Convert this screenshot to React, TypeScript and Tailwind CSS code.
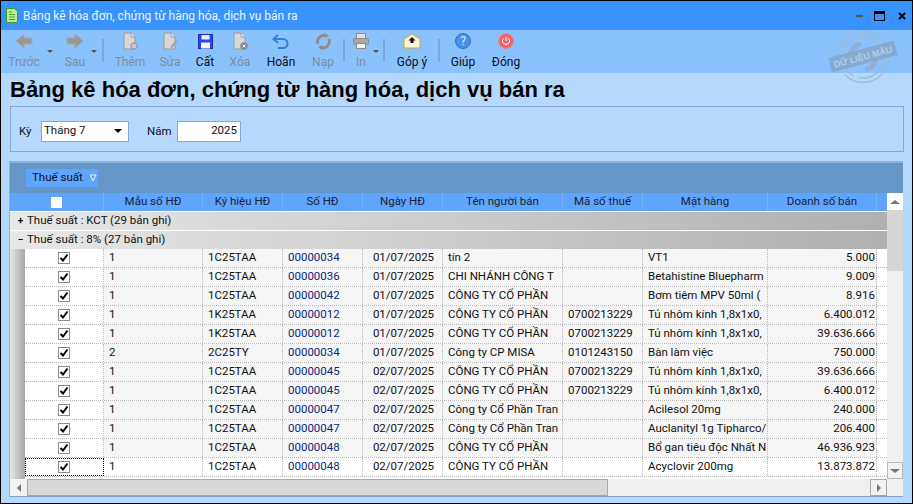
import { ReactNode } from "react";

const rows = [
  ["1", "1C25TAA", "00000034", "01/07/2025", "tín 2", "", "VT1", "5.000"],
  ["1", "1C25TAA", "00000036", "01/07/2025", "CHI NHÁNH CÔNG T", "", "Betahistine Bluepharm", "9.009"],
  ["1", "1C25TAA", "00000042", "01/07/2025", "CÔNG TY CỔ PHẦN", "", "Bơm tiêm MPV 50ml (", "8.916"],
  ["1", "1K25TAA", "00000012", "01/07/2025", "CÔNG TY CỔ PHẦN", "0700213229", "Tủ nhôm kính 1,8x1x0,", "6.400.012"],
  ["1", "1K25TAA", "00000012", "01/07/2025", "CÔNG TY CỔ PHẦN", "0700213229", "Tủ nhôm kính 1,8x1x0,", "39.636.666"],
  ["2", "2C25TY", "00000034", "01/07/2025", "Công ty CP MISA", "0101243150", "Bàn làm việc", "750.000"],
  ["1", "1C25TAA", "00000045", "02/07/2025", "CÔNG TY CỔ PHẦN", "0700213229", "Tủ nhôm kính 1,8x1x0,", "39.636.666"],
  ["1", "1C25TAA", "00000045", "02/07/2025", "CÔNG TY CỔ PHẦN", "0700213229", "Tủ nhôm kính 1,8x1x0,", "6.400.012"],
  ["1", "1C25TAA", "00000047", "02/07/2025", "Công ty Cổ Phần Tran", "", "Acilesol 20mg", "240.000"],
  ["1", "1C25TAA", "00000047", "02/07/2025", "Công ty Cổ Phần Tran", "", "Auclanityl 1g Tipharco/", "206.400"],
  ["1", "1C25TAA", "00000048", "02/07/2025", "CÔNG TY CỔ PHẦN", "", "Bổ gan tiêu độc Nhất N", "46.936.923"],
  ["1", "1C25TAA", "00000048", "02/07/2025", "CÔNG TY CỔ PHẦN", "", "Acyclovir 200mg", "13.873.872"],
];

const headers = ["Mẫu số HĐ", "Ký hiệu HĐ", "Số HĐ", "Ngày HĐ", "Tên người bán", "Mã số thuế", "Mặt hàng", "Doanh số bán"];

function Tool({ label, icon, off, w }: { label: string; icon: ReactNode; off?: boolean; w: string }) {
  return (
    <div className={`${w} flex shrink-0 flex-col items-center pt-[1px]`}>
      <div className="flex h-[20px] items-center justify-center">{icon}</div>
      <span className={`mt-[4px] whitespace-nowrap text-[12px] leading-[14px] ${off ? "text-[#7d8b99]" : "text-[#0d0d1a]"}`}>{label}</span>
    </div>
  );
}

function Caret({ className }: { className: string }) {
  return <div className={`h-0 w-0 shrink-0 self-start border-x-[3px] border-t-[3px] border-x-transparent border-t-[#555] ${className}`} />;
}

function Sep({ className }: { className: string }) {
  return <div className={`mt-[9px] h-[23px] w-[2px] shrink-0 bg-[#7ba6d6] ${className}`} />;
}

const PageIcon = ({ badge }: { badge: ReactNode }) => (
  <svg width="18" height="18" viewBox="0 0 18 18">
    <path d="M3 1h7l4 4v12H3z" fill="#d8d8d8" stroke="#9a9a9a" />
    <path d="M10 1v4h4" fill="#f2f2f2" stroke="#9a9a9a" />
    {badge}
  </svg>
);

function Check({ on }: { on?: boolean }) {
  return (
    <div className="flex h-[12px] w-[12px] items-center justify-center border border-[#8c8c8c] bg-white">
      {on && (
        <svg width="10" height="10" viewBox="0 0 10 10">
          <path d="M1.5 5l2.500 2.500L8.500 1.500" fill="none" stroke="#000" strokeWidth="2" />
        </svg>
      )}
    </div>
  );
}

function Stamp() {
  return (
    <svg className="absolute left-[823px] top-[28px]" width="78" height="56" viewBox="0 0 78 56">
      <circle cx="39" cy="28" r="25.500" fill="none" stroke="#9dbad9" strokeWidth="1.500" strokeDasharray="60 6 44 6" />
      <circle cx="39" cy="28" r="21" fill="none" stroke="#9dbad9" strokeWidth="1.500" strokeDasharray="38 5" />
      <circle cx="39" cy="28" r="13" fill="none" stroke="#8fb0d4" strokeWidth="5" strokeDasharray="18 23" />
      <g transform="rotate(-15 39 28)">
        <rect x="5" y="20" width="68" height="15" fill="#86a9cf" />
        <text x="39" y="31" textAnchor="middle" fontSize="9" fontWeight="700" fill="#b5cfea" fontFamily="Liberation Sans, sans-serif">
          DỮ LIỆU MẪU
        </text>
      </g>
    </svg>
  );
}

export default function App() {
  return (
    <div className="relative flex h-[504px] w-[913px] flex-col overflow-hidden border border-black bg-[#b5d9fd] font-['Roboto',sans-serif] text-[11.5px] text-[#111]">
      <div className="flex h-[29px] shrink-0 items-center bg-[#3993ff] pl-[5px] pr-[3px]">
        <svg width="12" height="15" viewBox="0 0 12 15">
          <path d="M0.500 0.500h8l3 3v11h-11z" fill="#b9ec9c" stroke="#3d9a22" />
          <path d="M3 4h3M3 6.500h6M3 9h6M3 11.500h6" stroke="#4f9e2c" strokeWidth="1.200" />
        </svg>
        <span className="ml-[5px] text-[12px] text-[#e8f3ff]">Bảng kê hóa đơn, chứng từ hàng hóa, dịch vụ bán ra</span>
        <div className="ml-auto flex items-center">
          <div className="h-[2px] w-[7px] bg-[#555]" />
          <div className="ml-[11px] h-[10px] w-[11px] border border-t-[3px] border-black" />
          <svg className="ml-[13px] mr-[3px]" width="8" height="8" viewBox="0 0 8 8">
            <path d="M1 1l6 6M7 1l-6 6" stroke="#000" strokeWidth="2" />
          </svg>
        </div>
      </div>

      <div className="flex h-[43px] shrink-0 items-start bg-[#8ac2fd] pl-[5px]">
        <Tool w="w-[36px]" off label="Trước" icon={<svg width="18" height="16" viewBox="0 0 18 16"><path d="M9 1L1 8l8 7v-4h8V5H9z" fill="#979797" stroke="#a5a5a5" /></svg>} />
        <Caret className="ml-[5px] mt-[20px]" />
        <Tool w="w-[30px] ml-[7px]" off label="Sau" icon={<svg width="18" height="16" viewBox="0 0 18 16"><path d="M9 1l8 7-8 7v-4H1V5h8z" fill="#979797" stroke="#a5a5a5" /></svg>} />
        <Caret className="ml-[1px] mt-[20px]" />
        <Sep className="ml-[5px]" />
        <Tool w="w-[36px] ml-[8px]" off label="Thêm" icon={<PageIcon badge={<circle cx="13" cy="14" r="3.200" fill="#c8c8c8" stroke="#8f8f8f" />} />} />
        <Tool w="w-[36px] ml-[4px]" off label="Sửa" icon={<PageIcon badge={<path d="M9 15l6-7 2 1.500-6 7z" fill="#a8a8a8" />} />} />
        <Tool w="w-[28px] ml-[3px]" label="Cất" icon={<svg width="15" height="15" viewBox="0 0 15 15"><rect x="0.500" y="0.500" width="14" height="14" fill="#2b46e8" stroke="#1a2fb8" /><rect x="3.500" y="1" width="8" height="4.500" fill="#e8eef8" /><rect x="3" y="8.500" width="9" height="6" fill="#f6f6f6" /></svg>} />
        <Tool w="w-[36px] ml-[3px]" off label="Xóa" icon={<PageIcon badge={<g><circle cx="13" cy="14" r="3.800" fill="#8a8a8a" /><path d="M11.500 12.500l3 3M14.500 12.500l-3 3" stroke="#eee" /></g>} />} />
        <Tool w="w-[36px] ml-[5px]" label="Hoãn" icon={<svg width="18" height="15" viewBox="0 0 18 15"><path d="M6 1L1.500 5 6 9M2 5h9a4 4 0 0 1 0 9H6" fill="none" stroke="#2e80d8" strokeWidth="2" /></svg>} />
        <Tool w="w-[36px] ml-[6px]" off label="Nạp" icon={<svg width="17" height="17" viewBox="0 0 17 17"><path d="M3 11A6.500 6.500 0 0 1 11 2.500M14 6a6.500 6.500 0 0 1-8 8.500" fill="none" stroke="#8d8d8d" strokeWidth="3" /><path d="M10 0l4 3-4 2zM7 17l-4-3 4-2z" fill="#8d8d8d" /></svg>} />
        <Sep className="ml-[2px]" />
        <Tool w="w-[24px] ml-[4px]" off label="In" icon={<svg width="16" height="16" viewBox="0 0 16 16"><rect x="3.500" y="0.500" width="9" height="5" fill="#e4e4e4" stroke="#8d8d8d" /><rect x="0.500" y="5.500" width="15" height="6" rx="1" fill="#a9a9a9" stroke="#8d8d8d" /><rect x="3.500" y="10.500" width="9" height="5" fill="#f0f0f0" stroke="#8d8d8d" /></svg>} />
        <Caret className="mt-[20px]" />
        <Sep className="ml-[4px]" />
        <Tool w="w-[44px] ml-[5px]" label="Góp ý" icon={<svg width="18" height="16" viewBox="0 0 18 16"><path d="M1 6l8-5 8 5v9H1z" fill="#fbf3d2" stroke="#c9a544" /><path d="M9 4l3.500 3.500H10.500V10h-3V7.500H5.500z" fill="#111" /></svg>} />
        <Sep className="ml-[4px]" />
        <Tool w="w-[36px] ml-[5px]" label="Giúp" icon={<div className="flex h-[16px] w-[16px] items-center justify-center rounded-full border border-[#2a6fd0] bg-[#4d92ea] text-[12px] leading-none text-[#dbe9fb]">?</div>} />
        <Tool w="w-[36px] ml-[7px]" label="Đóng" icon={<svg width="16" height="16" viewBox="0 0 16 16"><circle cx="8" cy="8" r="7.500" fill="#f0646a" stroke="#e28a90" /><path d="M5.500 5.500a3.500 3.500 0 1 0 5 0M8 4v4" fill="none" stroke="#fff" /></svg>} />
      </div>

      <Stamp />

      <h1 className="ml-[9px] mt-[4px] font-['Liberation_Sans',sans-serif] text-[22px] font-bold leading-[26px] text-black">Bảng kê hóa đơn, chứng từ hàng hóa, dịch vụ bán ra</h1>

      <div className="ml-[9px] mr-[8px] mt-[3px] flex h-[46px] shrink-0 items-center border border-[#86a5d8] pl-[8px] pt-[4px]">
        <span className="w-[22px] pt-[2px]">Kỳ</span>
        <div className="flex h-[21px] w-[88px] items-center justify-between border border-[#8ba3dc] bg-white pl-[2px] pr-[6px]">
          <span className="-mt-[1px]">Tháng 7</span>
          <div className="h-0 w-0 border-x-[4px] border-t-[4px] border-x-transparent border-t-black" />
        </div>
        <span className="ml-[18px] w-[30px] pt-[2px]">Năm</span>
        <div className="flex h-[21px] w-[64px] items-center justify-end border border-[#8ba3dc] bg-white pr-[3px]">2025</div>
      </div>

      <div className="mb-[6px] ml-[8px] mr-[9px] mt-[9px] flex min-h-0 flex-1 flex-col border-b border-l border-t-2 border-[#8ab4e0] border-b-[#7ba3d0]">
        <div className="flex h-[30px] shrink-0 items-center bg-[#6496c8] pl-[16px]">
          <div className="flex h-[18px] w-[72px] items-center bg-[#5fa5ff] pl-[6px]">
            <span className="whitespace-nowrap">Thuế suất</span>
            <svg className="ml-[6px]" width="8" height="8" viewBox="0 0 8 8"><path d="M1 1h6L4 7z" fill="none" stroke="#eef5ff" /></svg>
          </div>
        </div>

        <div className="flex min-h-0 flex-1">
          <div className="flex min-w-0 flex-1 flex-col overflow-hidden bg-[#f0f0f0]">
            <div className="grid h-[19px] shrink-0 grid-cols-[94px_99px_80px_80px_80px_120px_80px_125px_109px_1fr] border-b border-white bg-[#5fa5ff]">
              <div className="flex items-center justify-center border-r border-[#78b2fb]">
                <div className="h-[11px] w-[11px] bg-white" />
              </div>
              {headers.map((h) => (
                <div key={h} className="flex items-center justify-center border-r border-[#78b2fb] text-[#1a2430]">{h}</div>
              ))}
              <div />
            </div>

            <div className="flex h-[19px] shrink-0 items-center border-b border-white bg-gradient-to-r from-[#e8e8e8] to-[#b0b0b0] pl-[4px]">
              <div className="flex w-[13px] justify-center text-[10px] font-bold leading-none">+</div>
              <span>Thuế suất : KCT (29 bản ghi)</span>
            </div>
            <div className="flex h-[18px] shrink-0 items-center bg-gradient-to-r from-[#e8e8e8] to-[#b0b0b0] pl-[4px]">
              <div className="flex w-[13px] justify-center text-[10px] font-bold leading-none">−</div>
              <span>Thuế suất : 8% (27 bản ghi)</span>
            </div>

            <div className="flex min-h-0 flex-1">
              <div className="w-[15px] shrink-0 bg-gradient-to-r from-[#e6e6e6] to-[#a8a8a8]" />
              <div className="min-w-0 flex-1 bg-white">
                {rows.map((r, i) => (
                  <div key={i} className="grid h-[19px] grid-cols-[79px_99px_80px_80px_80px_120px_80px_125px_109px] border-b border-dotted border-[#b8b8b8]">
                    <div className={`flex items-center justify-center border-r border-dotted border-[#b8b8b8] bg-white ${i === rows.length - 1 ? "outline-1 -outline-offset-1 outline-dotted outline-black" : ""}`}>
                      <Check on />
                    </div>
                    {r.map((c, j) => (
                      <div
                        key={j}
                        className={`flex items-center overflow-hidden whitespace-nowrap border-r border-dotted border-[#b8b8b8] pl-[5px] ${j === 7 ? "justify-end pr-[1px]" : "pr-[3px]"} ${j === 3 ? "justify-center" : ""} ${i === rows.length - 1 ? "bg-white" : "bg-[#f5f5f5]"} ${j === 2 ? "text-[#0a2a80]" : ""}`}
                      >
                        {c}
                      </div>
                    ))}
                  </div>
                ))}
              </div>
            </div>

            <div className="flex h-[17px] shrink-0 items-stretch bg-[#efefef]">
              <div className="flex w-[17px] items-center justify-center bg-[#f2f2f2]">
                <div className="h-0 w-0 border-y-[4px] border-r-[4px] border-y-transparent border-r-[#777]" />
              </div>
              <div className="w-[581px] border border-[#a8a8a8] bg-[#d8d8d8]" />
              <div className="flex-1" />
              <div className="flex w-[17px] items-center justify-center border border-[#a8a8a8] bg-[#f2f2f2]">
                <div className="h-0 w-0 border-y-[4px] border-l-[4px] border-y-transparent border-l-[#777]" />
              </div>
            </div>
          </div>

          <div className="flex w-[16px] shrink-0 flex-col bg-[#f0f0f0]">
            <div className="flex h-[17px] items-center justify-center bg-white">
              <div className="h-0 w-0 border-x-[5px] border-b-[4px] border-x-transparent border-b-[#777]" />
            </div>
            <div className="h-[61px] bg-[#d6d6d6]" />
            <div className="flex-1 bg-[#f0f0f0]" />
            <div className="mb-[17px] flex h-[17px] items-center justify-center border border-[#b8b8b8] bg-[#f2f2f2]">
              <div className="h-0 w-0 border-x-[5px] border-t-[4px] border-x-transparent border-t-[#777]" />
            </div>
          </div>
        </div>
      </div>
    </div>
  );
}
